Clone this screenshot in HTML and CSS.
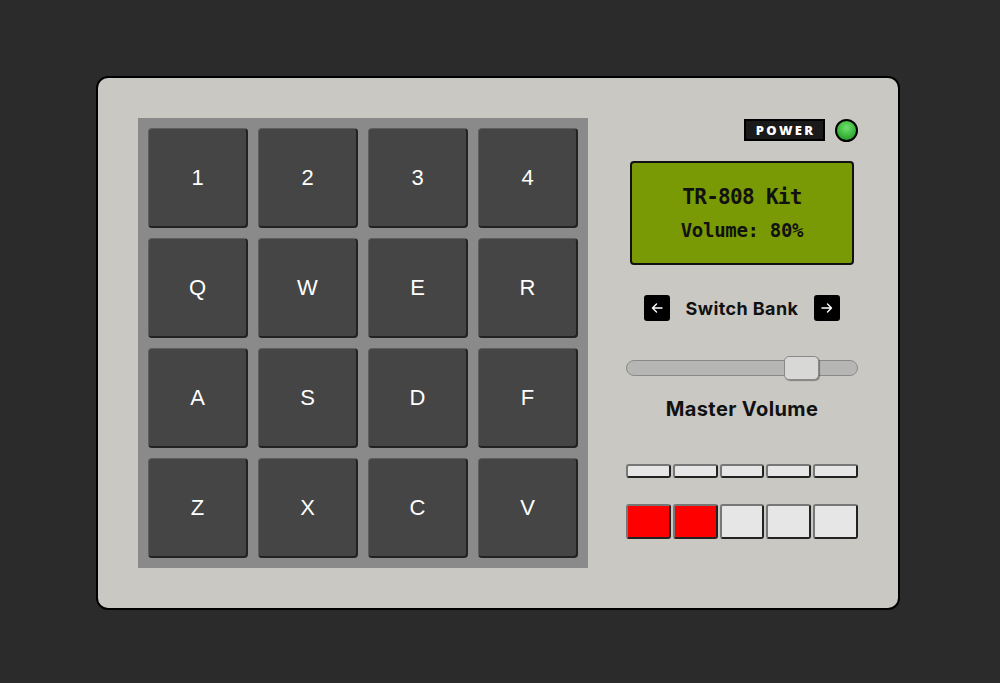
FILE: index.html
```html
<!DOCTYPE html>
<html>
<head>
<meta charset="utf-8">
<link rel="stylesheet" href="styles.css">
</head>
<body>
<div class="machine">
  <div class="pads">
    <div class="pad">1</div><div class="pad">2</div><div class="pad">3</div><div class="pad">4</div>
    <div class="pad">Q</div><div class="pad">W</div><div class="pad">E</div><div class="pad">R</div>
    <div class="pad">A</div><div class="pad">S</div><div class="pad">D</div><div class="pad">F</div>
    <div class="pad">Z</div><div class="pad">X</div><div class="pad">C</div><div class="pad">V</div>
  </div>
  <div class="panel">
    <div class="power-row">
      <span class="power-label">POWER</span>
      <span class="led"></span>
    </div>
    <div class="lcd">
      <div class="lcd-title">TR-808 Kit</div>
      <div class="lcd-sub">Volume: 80%</div>
    </div>
    <div class="bank-row">
      <button class="arrow-btn"><svg width="14" height="14" viewBox="0 0 14 14"><path d="M12 7H2.5M6.5 3L2.5 7L6.5 11" fill="none" stroke="#fff" stroke-width="1.4" stroke-linecap="round" stroke-linejoin="round"/></svg></button>
      <span class="bank-label">Switch Bank</span>
      <button class="arrow-btn"><svg width="14" height="14" viewBox="0 0 14 14"><path d="M2 7H11.5M7.5 3L11.5 7L7.5 11" fill="none" stroke="#fff" stroke-width="1.4" stroke-linecap="round" stroke-linejoin="round"/></svg></button>
    </div>
    <div class="slider">
      <div class="track"></div>
      <div class="thumb"></div>
    </div>
    <div class="vol-label">Master Volume</div>
    <div class="bars">
      <span class="bar"></span><span class="bar"></span><span class="bar"></span><span class="bar"></span><span class="bar"></span>
    </div>
    <div class="steps">
      <span class="step on"></span><span class="step on"></span><span class="step"></span><span class="step"></span><span class="step"></span>
    </div>
  </div>
</div>
</body>
</html>
```

FILE: styles.css
```css
html, body {
  margin: 0;
  padding: 0;
}
body {
  background: #2b2b2b;
  min-height: 683px;
  box-sizing: border-box;
  padding-top: 76px;
  display: flex;
  align-items: flex-start;
  justify-content: center;
  font-family: "Liberation Sans", Arial, sans-serif;
}
.machine {
  box-sizing: border-box;
  width: 804px;
  height: 534px;
  margin-right: 4px;
  background: #c9c8c3;
  border: 2px solid #000;
  border-radius: 12px;
  padding: 40px;
  display: flex;
  justify-content: space-between;
}
.pads {
  width: 450px;
  height: 450px;
  box-sizing: border-box;
  background: #8a8a8a;
  padding: 10px;
  display: grid;
  grid-template-columns: repeat(4, 100px);
  grid-template-rows: repeat(4, 100px);
  gap: 10px;
}
.pad {
  box-sizing: border-box;
  background: #454545;
  border-radius: 4px;
  border: 1px solid #5e5e5e;
  border-right: 2px solid #222;
  border-bottom: 2px solid #222;
  color: #fff;
  font-size: 22px;
  display: flex;
  align-items: center;
  justify-content: center;
  padding-top: 1px;
}
.panel {
  width: 232px;
  display: flex;
  flex-direction: column;
}
.power-row {
  display: flex;
  justify-content: flex-end;
  align-items: center;
  gap: 10px;
  height: 24px;
}
.power-label {
  box-sizing: border-box;
  height: 22px;
  width: 81px;
  background: #1a1a1a;
  border: 2px solid #000;
  color: #fff;
  font-family: "Open Sans", sans-serif;
  font-weight: 800;
  font-size: 13px;
  letter-spacing: 2.3px;
  display: flex;
  align-items: center;
  justify-content: center;
  padding-left: 2px;
}
.led {
  box-sizing: border-box;
  width: 23px;
  height: 23px;
  border-radius: 50%;
  border: 2px solid #000;
  background: radial-gradient(circle at 50% 35%, #6fe06f 0%, #3cb63c 55%, #1f8a1f 100%);
}
.lcd {
  box-sizing: border-box;
  margin: 19px 4px 0 4px;
  height: 104px;
  background: #7a9a05;
  border: 2px solid #111;
  border-radius: 4px;
  display: flex;
  flex-direction: column;
  align-items: center;
  justify-content: center;
  gap: 10px;
  font-family: "DejaVu Sans Mono", monospace;
  font-weight: bold;
  color: #111;
}
.lcd-title {
  font-size: 21px;
  letter-spacing: -0.7px;
}
.lcd-sub {
  font-size: 19px;
  letter-spacing: -0.3px;
}
.bank-row {
  margin-top: 30px;
  display: flex;
  align-items: center;
  justify-content: center;
  gap: 16px;
  height: 26px;
}
.arrow-btn {
  width: 26px;
  height: 26px;
  padding: 0;
  border: none;
  border-radius: 3px;
  background: #000;
  display: flex;
  align-items: center;
  justify-content: center;
}
.bank-label {
  font-family: "Inter", sans-serif;
  font-weight: 700;
  font-size: 18px;
  letter-spacing: 0.4px;
  color: #111;
}
.slider {
  position: relative;
  margin-top: 35px;
  height: 24px;
}
.track {
  position: absolute;
  left: 0;
  right: 0;
  top: 4px;
  height: 16px;
  box-sizing: border-box;
  background: #b6b6b4;
  border: 1px solid #8a8a8a;
  border-radius: 8px;
}
.thumb {
  position: absolute;
  left: 158px;
  top: 0;
  width: 35px;
  height: 24px;
  box-sizing: border-box;
  background: #d8d8d7;
  border: 1px solid #888;
  border-radius: 5px;
  box-shadow: 1px 1px 1px rgba(0,0,0,0.35);
}
.vol-label {
  margin-top: 17px;
  text-align: center;
  font-family: "Inter", sans-serif;
  font-weight: 700;
  font-size: 20px;
  letter-spacing: 0.4px;
  color: #111;
}
.bars {
  margin-top: 43px;
  display: flex;
  gap: 2px;
}
.bar {
  flex: 1;
  height: 14px;
  box-sizing: border-box;
  background: #e6e6e6;
  border: 2px solid #777;
  border-right-color: #222;
  border-bottom-color: #222;
  border-radius: 3px;
}
.steps {
  margin-top: 26px;
  display: flex;
  gap: 2px;
}
.step {
  flex: 1;
  height: 35px;
  box-sizing: border-box;
  background: #e6e6e6;
  border: 2px solid #777;
  border-right-color: #222;
  border-bottom-color: #222;
  border-radius: 3px;
}
.step.on {
  background: #ff0000;
}
```
